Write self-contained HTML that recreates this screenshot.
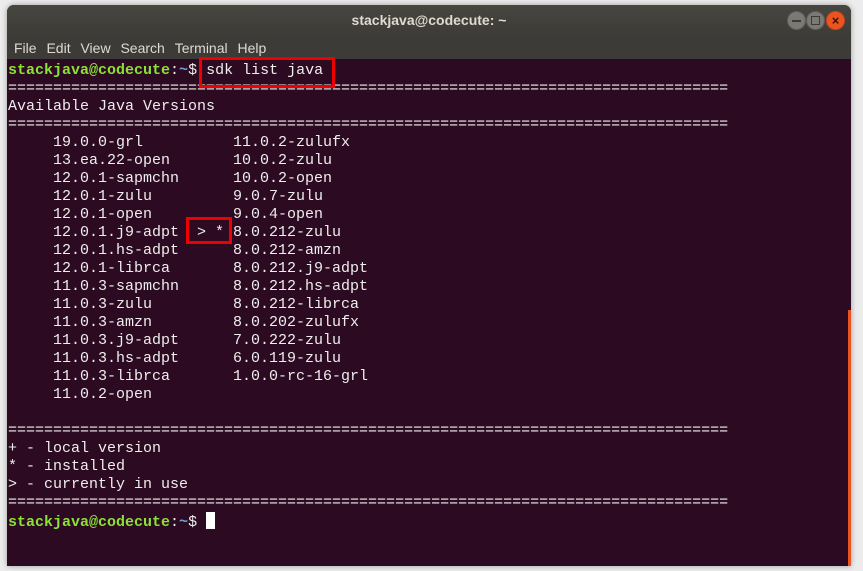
<!DOCTYPE html>
<html><head><meta charset="utf-8"><style>
body{margin:0;width:863px;height:571px;background:#ececec;position:relative;overflow:hidden;font-family:"Liberation Sans",sans-serif}
.win{position:absolute;left:7px;top:5px;width:844px;height:561px;border-radius:7px 7px 0 0;overflow:hidden;background:#3c3b37;box-shadow:0 0 6px rgba(0,0,0,.35)}
.title{position:absolute;left:0;top:0;width:100%;height:32px;background:linear-gradient(#47463f,#3c3b37);color:#dfdbd2;font-weight:bold;font-size:14px;text-align:center;line-height:30px}
.menu{position:absolute;left:0;top:32px;width:100%;height:22px;color:#dfdbd2;font-size:14px;line-height:22px}
.menu span{margin-left:7px;margin-right:-1px}
.term{position:absolute;left:0;top:54px;width:844px;height:507px;background:#2c0a22}
.sb{position:absolute;right:0;top:251px;width:3px;height:256px;background:#e95420}
pre{position:absolute;left:1px;top:3px;margin:0;font-family:"Liberation Mono",monospace;font-size:15px;line-height:18px;color:#eeeeec;letter-spacing:0}
.g{color:#8ae234;font-weight:bold}.b{color:#729fcf;font-weight:bold}
.btn{position:absolute;top:6px;width:17px;height:17px;border-radius:50%;background:#7a7974;border:1px solid #5e5d58}
.box{position:absolute;border:3px solid #e00;box-sizing:border-box}
.cur{display:inline-block;width:9px;height:17px;background:#fff;vertical-align:-3px}
</style></head><body>
<div class="win">
<div class="title">stackjava@codecute: ~</div>
<div class="btn" style="left:780px"><div style="position:absolute;left:4px;top:8px;width:9px;height:2px;background:#3c3b37"></div></div>
<div class="btn" style="left:799px"><div style="position:absolute;left:4px;top:4px;width:7px;height:7px;border:1.5px solid #3c3b37"></div></div>
<div class="btn" style="left:819px;background:#e95420;border-color:#c7461a;color:#3a1000;font-size:13px;line-height:17px;text-align:center;font-weight:bold">×</div>
<div class="menu"><span>File</span> <span>Edit</span> <span>View</span> <span>Search</span> <span>Terminal</span> <span>Help</span></div>
<div class="term"><div class="sb"></div>
<pre><span class="g">stackjava@codecute</span>:<span class="b">~</span>$ sdk list java
================================================================================
Available Java Versions
================================================================================
     19.0.0-grl          11.0.2-zulufx
     13.ea.22-open       10.0.2-zulu
     12.0.1-sapmchn      10.0.2-open
     12.0.1-zulu         9.0.7-zulu
     12.0.1-open         9.0.4-open
     12.0.1.j9-adpt  > * 8.0.212-zulu
     12.0.1.hs-adpt      8.0.212-amzn
     12.0.1-librca       8.0.212.j9-adpt
     11.0.3-sapmchn      8.0.212.hs-adpt
     11.0.3-zulu         8.0.212-librca
     11.0.3-amzn         8.0.202-zulufx
     11.0.3.j9-adpt      7.0.222-zulu
     11.0.3.hs-adpt      6.0.119-zulu
     11.0.3-librca       1.0.0-rc-16-grl
     11.0.2-open

================================================================================
+ - local version
* - installed
&gt; - currently in use
================================================================================
<span class="g">stackjava@codecute</span>:<span class="b">~</span>$ <span class="cur"></span></pre>
</div></div>
<div class="box" style="left:199px;top:57px;width:136px;height:31px"></div>
<div class="box" style="left:186px;top:217px;width:46px;height:27px"></div>
</body></html>
